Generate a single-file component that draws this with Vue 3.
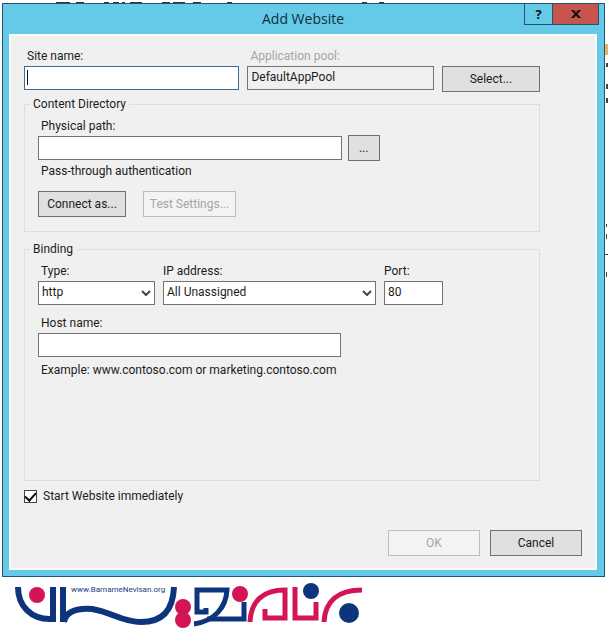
<script setup>
import { ref } from 'vue'

const siteName = ref('')
const pool = ref('DefaultAppPool')
const path = ref('')
const type = ref('http')
const ip = ref('All Unassigned')
const port = ref('80')
const host = ref('')
const startNow = ref(true)
</script>

<template>
  <div class="page">
    <svg class="behind-top" viewBox="0 0 330 3" aria-hidden="true">
      <path d="M0 2.5h14M20 2.5h8M48 2.5h5M57 2.5h6M66 2.5h3M74 2.5h12M106 2.5h8M117 2.5h12M137 2.5h8M171 2.5h5M306 2.5h5M323 2.5h5" />
    </svg>
    <svg class="behind-right" viewBox="0 0 4 300" aria-hidden="true">
      <path d="M0 44h3v11h-3z" fill="#e9b45c" />
      <path d="M1 63h2v4h-2zM1 84h2v5h-2zM1 98h2v5h-2zM1 224h1v3h-1zM1 234h1v5h-1zM0 254h3v1h-3zM1 272h1v5h-1z" fill="#444" />
    </svg>
    <main class="window">
      <header class="titlebar">
        <h1>Add Website</h1>
        <div class="caption">
          <button class="help" aria-label="Help">?</button>
          <button class="close" aria-label="Close">
            <svg viewBox="0 0 10 8"><path d="M0 0h3l2 2.4L7 0h3L6.6 4 10 8H7L5 5.6 3 8H0l3.4-4z" /></svg>
          </button>
        </div>
      </header>
      <form class="body" @submit.prevent>
        <div class="form">
          <div class="top">
            <div class="field site">
              <label for="site">Site name:</label>
              <div class="focus-box">
                <input id="site" v-model="siteName" type="text" />
                <i class="caret"></i>
              </div>
            </div>
            <div class="field">
              <label for="pool" class="dim">Application pool:</label>
              <input id="pool" v-model="pool" type="text" readonly />
            </div>
            <button type="button" class="btn">Select...</button>
          </div>

          <fieldset class="directory">
            <legend>Content Directory</legend>
            <div class="path-row">
              <div class="field">
                <label for="path">Physical path:</label>
                <input id="path" v-model="path" type="text" />
              </div>
              <button type="button" class="btn" aria-label="Browse">...</button>
            </div>
            <p>Pass-through authentication</p>
            <div class="actions">
              <button type="button" class="btn connect">Connect as...</button>
              <button type="button" class="btn test" disabled>Test Settings...</button>
            </div>
          </fieldset>

          <fieldset class="binding">
            <legend>Binding</legend>
            <div class="bind-row">
              <div class="field">
                <label for="type">Type:</label>
                <div class="select">
                  <select id="type" v-model="type">
                    <option>http</option>
                    <option>https</option>
                  </select>
                  <svg viewBox="0 0 10 6"><path d="M1 1l4 4 4-4" /></svg>
                </div>
              </div>
              <div class="field">
                <label for="ip">IP address:</label>
                <div class="select">
                  <select id="ip" v-model="ip">
                    <option>All Unassigned</option>
                  </select>
                  <svg viewBox="0 0 10 6"><path d="M1 1l4 4 4-4" /></svg>
                </div>
              </div>
              <div class="field">
                <label for="port">Port:</label>
                <input id="port" v-model="port" type="text" />
              </div>
            </div>
            <div class="field host">
              <label for="host">Host name:</label>
              <input id="host" v-model="host" type="text" />
            </div>
            <p>Example: www.contoso.com or marketing.contoso.com</p>
          </fieldset>

          <label class="check">
            <input v-model="startNow" type="checkbox" />
            <span>Start Website immediately</span>
          </label>
        </div>
        <footer class="footer">
          <button type="button" class="btn" disabled>OK</button>
          <button type="button" class="btn">Cancel</button>
        </footer>
      </form>
    </main>

    <div class="logo">
      <svg viewBox="0 0 350 48" role="img" aria-label="www.BarnameNevisan.org">
        <g fill="none" stroke="#0f347e" stroke-width="6">
          <path d="M4 5C4 24 17 37 36 37H39V5" />
          <path d="M49 40V5" />
          <path d="M50 40C52 29 63 26 78 27C98 30 108 40 127 40C149 40 159 28 160 5" />
          <path d="M192 26V30H183V8H213C212 26 200 39 180 42" stroke-width="5" />
          <path d="M193 37H230V20" stroke-width="5" />
        </g>
        <g fill="none" stroke="#d31455" stroke-width="5">
          <path d="M236 40C237 19 249 8 271 8V36H251V27" />
          <path d="M281 5V36H302V20" />
          <path d="M310 40C311 19 324 8 348 8" />
        </g>
        <g fill="#d31455">
          <circle cx="23" cy="13" r="8" />
          <circle cx="169" cy="25" r="8" />
          <circle cx="169" cy="38" r="8" />
          <circle cx="226" cy="12" r="8" />
        </g>
        <g fill="#0f347e">
          <circle cx="297" cy="9" r="8" />
          <circle cx="335" cy="31" r="10" />
        </g>
        <text x="57" y="10">www.BarnameNevisan.org</text>
      </svg>
    </div>
  </div>
</template>

<style>
body {
  margin: 0;
  background: #fff;
}
</style>

<style scoped>
* {
  box-sizing: border-box;
}
.page {
  position: relative;
  padding: 3px 4px 0 2px;
  font: 12px/16px Roboto, "Noto Sans", sans-serif;
  color: #1c1c1c;
}
.behind-top {
  position: absolute;
  left: 56px;
  top: 0;
  width: 330px;
  height: 3px;
  stroke: #333;
  stroke-width: 1;
}
.behind-right {
  position: absolute;
  right: 0;
  top: 0;
  width: 4px;
  height: 300px;
}
.window {
  position: relative;
  background: #65cae8;
  border: 1px solid #23566b;
  padding: 0 7px 6px 6px;
}
.titlebar {
  height: 30px;
  display: flex;
  justify-content: center;
  align-items: center;
}
h1 {
  margin: 0;
  font: 400 14px/20px "Open Sans", "Noto Sans", sans-serif;
  color: #10303c;
}
.caption {
  position: absolute;
  top: -1px;
  right: 5px;
  display: flex;
}
.caption button {
  height: 22px;
  padding: 0;
  border: 1px solid #23566b;
  display: flex;
  align-items: center;
  justify-content: center;
  color: #111;
  font: 700 13px/16px "Open Sans", sans-serif;
}
.caption .help {
  width: 29px;
  background: #65cae8;
}
.caption .close {
  width: 47px;
  margin-left: -1px;
  background: #c7544f;
}
.close svg {
  width: 10px;
  height: 8px;
  fill: #1a1010;
}
.body {
  background: #f0f0f0;
  border: 2px solid #fafafa;
  padding: 12px 13px;
}
.form {
  margin-right: 42px;
}
.top {
  display: grid;
  grid-template-columns: 215fr 186fr 98fr;
  column-gap: 8px;
  align-items: end;
}
.top .btn {
  margin-bottom: -2px;
}
.field {
  display: flex;
  flex-direction: column;
  gap: 2px;
  min-width: 0;
}
label,
p {
  padding-left: 3px;
}
.dim {
  color: #a5a5a5;
}
input[type="text"],
select {
  width: 100%;
  height: 24px;
  margin: 0;
  padding: 0 3px 2px;
  border: 1px solid #737373;
  border-radius: 0;
  background: #fff;
  color: #1c1c1c;
  font: inherit;
  outline: none;
  appearance: none;
}
input[readonly] {
  background: #f0f0f0;
}
.focus-box {
  position: relative;
  display: flex;
}
#site {
  border-color: #3c6c98;
}
.caret {
  position: absolute;
  left: 3px;
  top: 4px;
  width: 1px;
  height: 15px;
  background: #111;
}
.btn {
  height: 26px;
  padding: 0;
  border: 1px solid #707070;
  border-radius: 0;
  background: #e0e0e0;
  color: #1c1c1c;
  font: inherit;
}
.btn:disabled {
  border-color: #bcbcbc;
  background: #f3f3f3;
  color: #a5a5a5;
}
fieldset {
  margin: 0;
  padding: 6px 13px 14px;
  border: 1px solid #dedede;
  min-width: 0;
}
legend {
  margin-left: -8px;
  padding: 0 3px;
  line-height: 16px;
}
p {
  margin: 0;
}
.directory {
  margin-top: 6px;
}
.path-row {
  display: grid;
  grid-template-columns: 306fr 32fr;
  column-gap: 6px;
  width: 70%;
  align-items: end;
}
.path-row .btn {
  margin-bottom: -1px;
}
.directory p {
  margin-top: 3px;
}
.actions {
  display: flex;
  gap: 17px;
  margin-top: 12px;
}
.connect {
  width: 88px;
}
.test {
  width: 93px;
}
.binding {
  margin-top: 9px;
  min-height: 240px;
}
.bind-row {
  display: grid;
  grid-template-columns: 117fr 213fr 59fr;
  column-gap: 8px;
  width: 83%;
}
.select {
  position: relative;
  display: flex;
}
.bind-row .field:nth-child(2) label,
.bind-row .field:nth-child(3) label {
  padding-left: 0;
}
.select svg {
  position: absolute;
  right: 4px;
  top: 9px;
  width: 10px;
  height: 6px;
  fill: none;
  stroke: #444;
  stroke-width: 2;
  pointer-events: none;
}
.host {
  width: 62%;
  margin-top: 10px;
}
.binding p {
  margin-top: 5px;
}
.check {
  display: flex;
  align-items: center;
  gap: 6px;
  width: fit-content;
  margin-top: 7px;
  padding: 0;
}
.check input {
  appearance: none;
  width: 13px;
  height: 13px;
  margin: 0;
  border: 1px solid #444;
  background: #fff;
  display: grid;
  place-items: center;
}
.check input:checked::before {
  content: "";
  width: 5px;
  height: 9px;
  margin-top: -2px;
  border: solid #111;
  border-width: 0 2px 2px 0;
  transform: rotate(42deg);
}
.footer {
  display: flex;
  justify-content: flex-end;
  gap: 10px;
  margin-top: 26px;
}
.footer .btn {
  width: 92px;
}
.logo {
  padding: 5px 0 0 12px;
}
.logo svg {
  display: block;
  width: 350px;
  height: 48px;
}
.logo text {
  font: 8px Roboto, sans-serif;
  fill: #16407f;
}
</style>
